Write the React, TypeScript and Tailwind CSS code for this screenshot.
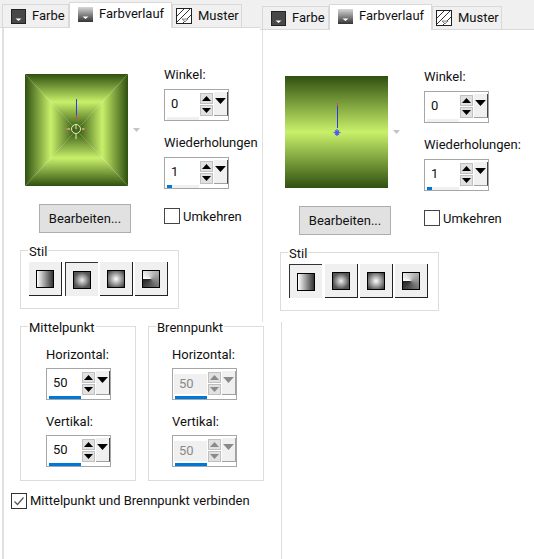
import React from "react";

const caretUp = "M0 5 L4.5 0 L9 5 Z";
const caretDown = "M0 0 L9 0 L4.5 5 Z";

// --- tab glyphs ---
const SwatchIcon = ({ fill }: { fill: string }) => (
  <svg width="15" height="15" viewBox="0 0 15 15" className="shrink-0">
    <rect x="0.5" y="0.5" width="14" height="14" fill={fill} stroke="#222" />
    <path d="M4.5 9.5 H10.5 L7.5 12 Z" fill="#fff" />
  </svg>
);

const GradientTabIcon = () => (
  <svg width="15" height="15" viewBox="0 0 15 15" className="shrink-0">
    <defs>
      <linearGradient id="tabgrad" x1="0" y1="0" x2="0" y2="1">
        <stop offset="0" stopColor="#d8d8d8" />
        <stop offset="1" stopColor="#333" />
      </linearGradient>
    </defs>
    <rect width="15" height="15" fill="url(#tabgrad)" />
    <path d="M4.5 9.5 H10.5 L7.5 12 Z" fill="#fff" />
  </svg>
);

const PatternIcon = () => (
  <svg width="16" height="16" viewBox="0 0 16 16" className="shrink-0">
    <rect x="0.5" y="0.5" width="15" height="15" fill="#fff" stroke="#222" />
    <path d="M1 8 L8 1 M1 14 L14 1 M7 15 L15 7" stroke="#333" fill="none" />
    <path d="M6 11 H12 L9 14 Z" fill="#ddd" stroke="#666" strokeWidth="0.7" />
  </svg>
);

const Tab = ({ label, icon, active, width }: { label: string; icon: React.ReactNode; active?: boolean; width: string }) => (
  <div
    className={`flex items-center gap-[6px] border-x border-t border-[#d9d9d9] ${width} ${
      active ? "relative -mb-px h-[26px] bg-white pb-[3px]" : "h-[23px] bg-[#f0f0f0]"
    }`}
  >
    {icon}
    <span className="text-[13px] leading-4 text-[#111]">{label}</span>
  </div>
);

const TabStrip = () => (
  <div className="flex h-[28px] items-end border-b border-[#d9d9d9] bg-[#f0f0f0] pl-[2px]">
    <Tab label="Farbe" width="w-[67px] pl-[8px]" icon={<SwatchIcon fill="#484848" />} />
    <Tab label="Farbverlauf" width="w-[103px] pl-[8px]" active icon={<GradientTabIcon />} />
    <Tab label="Muster" width="w-[70px] pl-[3px]" icon={<PatternIcon />} />
  </div>
);

// --- number field with spin arrows and slider track ---
const Spin = ({ value, fill = 0, disabled }: { value: string; fill?: number; disabled?: boolean }) => {
  const arrow = disabled ? "#8a8a8a" : "#000";
  return (
    <div className="flex h-[32px] w-[65px] border border-[#a6a6a6] bg-white pl-[1px] pt-[1px]">
      <div className="flex w-[33px] shrink-0 flex-col">
        <div
          className={`pl-[5px] text-[13px] leading-[20px] ${
            disabled ? "mt-[4px] h-[20px] bg-[#f0f0f0] text-[#8a8a8a]" : "h-[24px] pt-[3px] text-[#111]"
          }`}
        >
          {value}
        </div>
        <div className="ml-[1px] mt-[2px] h-[3px] bg-[#f0f0f0]">
          <div className="h-full bg-[#0078d7]" style={{ width: `${fill}%` }} />
        </div>
      </div>
      <div className="ml-[1px] mt-[2px] flex flex-col gap-[1px]">
        <div className="flex h-[11px] w-[13px] items-center justify-center border border-[#c0c0c0] bg-[#e1e1e1]">
          <svg width="9" height="5" viewBox="0 0 9 5"><path d={caretUp} fill={arrow} /></svg>
        </div>
        <div className="flex h-[11px] w-[13px] items-center justify-center border border-[#c0c0c0] bg-[#e1e1e1]">
          <svg width="9" height="5" viewBox="0 0 9 5"><path d={caretDown} fill={arrow} /></svg>
        </div>
      </div>
      <div
        className={`ml-[1px] mt-[1px] flex h-[24px] w-[14px] items-start justify-center border-r border-b bg-[#f0f0f0] pt-[6px] ${
          disabled ? "border-[#a0a0a0]" : "border-r-[#444] border-b-[#a0a0a0]"
        }`}
      >
        <svg width="11" height="6" viewBox="0 0 9 5"><path d={caretDown} fill={arrow} /></svg>
      </div>
    </div>
  );
};

const Box = ({ checked }: { checked?: boolean }) => (
  <div className={`flex h-[16px] w-[16px] shrink-0 items-center justify-center border bg-white ${checked ? "border-[#333]" : "border-[#444]"}`}>
    {checked && (
      <svg width="12" height="12" viewBox="0 0 12 12">
        <path d="M1.5 6.5 L4.5 9.5 L10.5 2.5" fill="none" stroke="#555" strokeWidth="1.2" />
      </svg>
    )}
  </div>
);

const Group = ({ title, className, children }: { title: string; className: string; children: React.ReactNode }) => (
  <fieldset className={`shrink-0 border border-[#dcdcdc] ${className}`}>
    <legend className="ml-[7px] h-[16px] px-[1px] text-[13px] leading-[20px] text-[#111]">{title}</legend>
    {children}
  </fieldset>
);

// --- gradient previews ---
const stops = (
  <>
    <stop offset="0" stopColor="#2f5010" />
    <stop offset="0.5" stopColor="#c9f06a" />
    <stop offset="1" stopColor="#2f5010" />
  </>
);

const RectPreview = () => (
  <svg width="103" height="112" viewBox="0 0 103 112" className="shrink-0">
    <defs>
      <linearGradient id="rt" gradientUnits="userSpaceOnUse" x1="0" y1="0" x2="0" y2="56">{stops}</linearGradient>
      <linearGradient id="rb" gradientUnits="userSpaceOnUse" x1="0" y1="112" x2="0" y2="56">{stops}</linearGradient>
      <linearGradient id="rl" gradientUnits="userSpaceOnUse" x1="0" y1="0" x2="51.5" y2="0">{stops}</linearGradient>
      <linearGradient id="rr" gradientUnits="userSpaceOnUse" x1="103" y1="0" x2="51.5" y2="0">{stops}</linearGradient>
    </defs>
    <polygon points="0,0 103,0 51.5,56" fill="url(#rt)" />
    <polygon points="0,112 103,112 51.5,56" fill="url(#rb)" />
    <polygon points="0,0 51.5,56 0,112" fill="url(#rl)" />
    <polygon points="103,0 51.5,56 103,112" fill="url(#rr)" />
    <path d="M51.5 25 V41" stroke="#2b3cf0" />
    <path d="M51.5 41 V45" stroke="#e0307a" />
    <circle cx="51" cy="55" r="4.5" fill="none" stroke="#e4f5a5" />
    <path d="M51 50 V55 M51 60 V65 M45 55 H41 M57 55 H60" stroke="#e4f5a5" fill="none" />
    <path d="M41 55 H43 M59 55 H61" stroke="#e0307a" fill="none" />
  </svg>
);

const LinearPreview = () => (
  <svg width="103" height="112" viewBox="0 0 103 112" className="shrink-0">
    <defs>
      <linearGradient id="lin" x1="0" y1="0" x2="0" y2="1">{stops}</linearGradient>
    </defs>
    <rect width="103" height="112" fill="url(#lin)" />
    <path d="M52.5 27 V30" stroke="#e0307a" />
    <path d="M52.5 30 V52" stroke="#2b3cf0" />
    <path d="M48.5 56.5 H55.5 M52 53 V60 M50 54.5 L54 58.5 M54 54.5 L50 58.5" stroke="#4a5ff0" strokeWidth="1.2" />
  </svg>
);

const Caret = () => (
  <svg width="7" height="4" viewBox="0 0 7 4" className="ml-[5px] mt-[61px] shrink-0">
    <path d="M0 0 H7 L3.5 4 Z" fill="#c4c4c4" />
  </svg>
);

// --- Stil buttons ---
const linearSwatch = "bg-[linear-gradient(to_right,#fff,#333)]";
const rectSwatch = "bg-[radial-gradient(closest-side,#eee,#555)]";
const radialSwatch = "bg-[radial-gradient(circle,#fff,#333)]";
const angleSwatch = "bg-[conic-gradient(from_270deg,#fff,#222)]";

const StyleBtn = ({ swatch, pressed, className = "" }: { swatch: string; pressed?: boolean; className?: string }) => (
  <div
    className={`flex h-[34px] w-[33px] items-center justify-center bg-[#f0f0f0] ${className} ${
      pressed ? "border-l border-t border-l-[#333] border-t-[#333]" : "border-r border-b border-r-[#222] border-b-[#222]"
    }`}
  >
    <div className={`h-[18px] w-[18px] border border-black ${swatch}`} />
  </div>
);

const StyleRow = ({ pressed }: { pressed: number }) => (
  <div className="flex pl-[8px]">
    <StyleBtn swatch={linearSwatch} pressed={pressed === 0} className="mr-[3px]" />
    <StyleBtn swatch={rectSwatch} pressed={pressed === 1} className="mr-[2px]" />
    <StyleBtn swatch={radialSwatch} pressed={pressed === 2} className="mr-[2px]" />
    <StyleBtn swatch={angleSwatch} pressed={pressed === 3} />
  </div>
);

// upper half shared by both panels
const Upper = ({ preview, pressed, label }: { preview: React.ReactNode; pressed: number; label: string }) => (
  <>
    <div className="mt-[39px] flex">
      <div className="ml-[14px] mt-[7px] shrink-0">{preview}</div>
      <Caret />
      <div className="ml-[24px] flex w-[110px] shrink-0 flex-col text-[13px] leading-4 text-[#111]">
        <span className="mb-[6px] whitespace-nowrap">Winkel:</span>
        <Spin value="0" />
        <span className="mb-[6px] mt-[14px] whitespace-nowrap">{label}</span>
        <Spin value="1" fill={16} />
      </div>
    </div>
    <div className="ml-[28px] mt-[15px] flex items-start">
      <button className="h-[29px] w-[92px] border border-[#adadad] bg-[#e1e1e1] text-[13px] text-[#111]">Bearbeiten...</button>
      <div className="ml-[33px] mt-[3px] flex items-center gap-[3px]">
        <Box />
        <span className="pt-[2px] text-[13px] leading-4 text-[#111]">Umkehren</span>
      </div>
    </div>
    <Group title="Stil" className="ml-[9px] mt-[9px] h-[67px] w-[159px]">
      <div className="mt-[4px]">
        <StyleRow pressed={pressed} />
      </div>
    </Group>
  </>
);

const Field = ({ label, value, disabled, className = "" }: { label: string; value: string; disabled?: boolean; className?: string }) => (
  <div className={`flex flex-col ${className}`}>
    <span className="mb-[5px] text-[13px] leading-4 text-[#111]">{label}</span>
    <Spin value={value} fill={100} disabled={disabled} />
  </div>
);

const CentreGroup = ({ title, disabled }: { title: string; disabled?: boolean }) => (
  <Group title={title} className="h-[163px] w-[116px]">
    <div className={`mt-[13px] flex w-[70px] flex-col ${disabled ? "ml-[23px]" : "ml-[25px]"}`}>
      <Field label="Horizontal:" value="50" disabled={disabled} />
      <Field label="Vertikal:" value="50" disabled={disabled} className="mt-[14px]" />
    </div>
  </Group>
);

export default function App() {
  return (
    <div className="flex h-[559px] w-[534px] overflow-hidden bg-white font-['Roboto',sans-serif]">
      {/* left panel: rectangular gradient */}
      <div className="flex w-[260px] shrink-0 flex-col">
        <TabStrip />
        <div className="ml-[2px] flex grow flex-col border-l-2 border-[#e0e0e0] pl-[7px]">
          <Upper preview={<RectPreview />} pressed={1} label="Wiederholungen" />
          <div className="ml-[9px] mt-[9px] flex gap-[12px]">
            <CentreGroup title="Mittelpunkt" />
            <CentreGroup title="Brennpunkt" disabled />
          </div>
          <div className="mt-[11px] flex items-center gap-[3px]">
            <Box checked />
            <span className="whitespace-nowrap pt-[1px] text-[13px] leading-4 text-[#111]">Mittelpunkt und Brennpunkt verbinden</span>
          </div>
        </div>
      </div>

      {/* right panel: linear gradient */}
      <div className="flex grow flex-col">
        <div className="h-[2px] shrink-0 bg-[#f0f0f0]" />
        <TabStrip />
        <div className="ml-[2px] h-[292px] shrink-0 border-l border-[#e0e0e0] pl-[8px]">
          <Upper preview={<LinearPreview />} pressed={0} label="Wiederholungen:" />
        </div>
        <div className="ml-[21px] grow border-l border-[#dcdcdc]" />
      </div>
    </div>
  );
}
